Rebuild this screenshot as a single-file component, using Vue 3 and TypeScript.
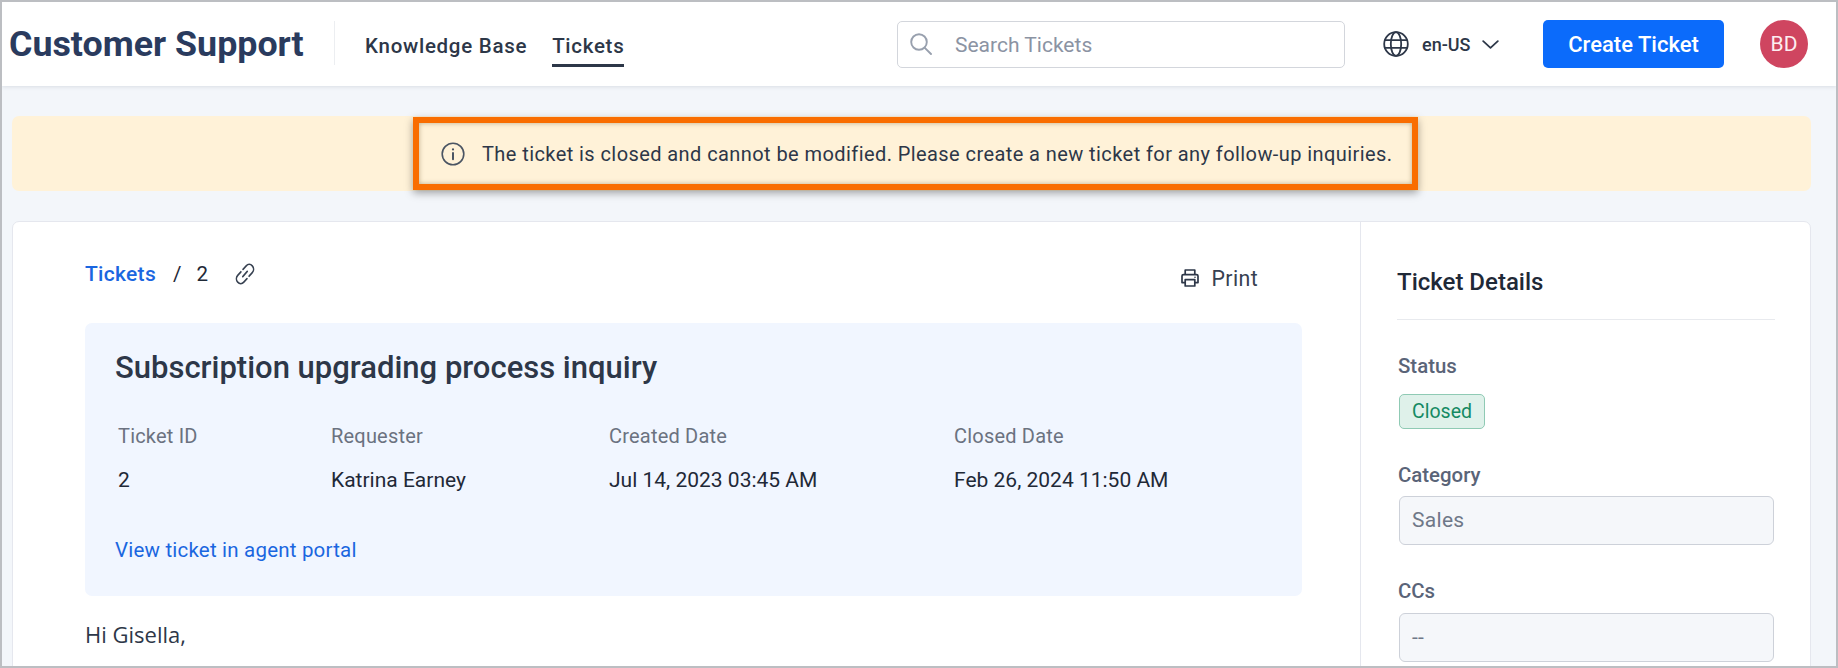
<script setup lang="ts">
const meta = [
  { label: 'Ticket ID', value: '2', w: 213 },
  { label: 'Requester', value: 'Katrina Earney', w: 278 },
  { label: 'Created Date', value: 'Jul 14, 2023 03:45 AM', w: 345 },
  { label: 'Closed Date', value: 'Feb 26, 2024 11:50 AM', w: 300 },
]
</script>

<template>
  <div class="frame">
    <header class="top">
      <div class="brand">Customer Support</div>
      <nav class="nav">
        <a class="nav-link">Knowledge Base</a>
        <a class="nav-link active">Tickets</a>
      </nav>
      <div class="search">
        <svg class="search-icon" viewBox="0 0 22 22" width="22" height="22" fill="none" stroke="#98a0ae" stroke-width="1.9" stroke-linecap="round">
          <circle cx="9" cy="9" r="7.8" />
          <path d="M14.8 14.8 21 21" />
        </svg>
        <span class="search-text">Search Tickets</span>
      </div>
      <div class="lang">
        <svg viewBox="0 0 26 26" width="26" height="26" fill="none" stroke="#2d3748" stroke-width="1.8">
          <circle cx="13" cy="13" r="11.8" />
          <ellipse cx="13" cy="13" rx="5.2" ry="11.8" />
          <path d="M1.6 9.2h22.8M1.6 16.8h22.8" />
        </svg>
        <span class="lang-text">en-US</span>
        <svg viewBox="0 0 17 9" width="17" height="9" fill="none" stroke="#2d3748" stroke-width="1.8" stroke-linecap="round" stroke-linejoin="round">
          <path d="M1.2 1.2 8.5 7.8l7.3-6.6" />
        </svg>
      </div>
      <button class="create">Create Ticket</button>
      <div class="avatar">BD</div>
    </header>

    <main class="page">
      <div class="banner">
        <div class="notice">
          <svg viewBox="0 0 24 24" width="24" height="24" fill="none" stroke="#4b5563" stroke-width="1.6" stroke-linecap="round">
            <circle cx="12" cy="12" r="10.8" />
            <path d="M12 11v6.2" stroke-width="2" />
            <circle cx="12" cy="7.4" r="1.1" fill="#4b5563" stroke="none" />
          </svg>
          <span class="notice-text">The ticket is closed and cannot be modified. Please create a new ticket for any follow-up inquiries.</span>
        </div>
      </div>

      <section class="card">
        <div class="main-col">
          <div class="crumbs">
            <div class="crumb-left">
              <a class="link">Tickets</a>
              <span class="slash">/</span>
              <span class="crumb-id">2</span>
              <svg class="link-icon" viewBox="0 0 20 22" width="20" height="22" fill="none" stroke="#374151" stroke-width="1.6" stroke-linecap="round" stroke-linejoin="round">
                <g transform="translate(10 11) scale(1 1.12) rotate(-45)">
                  <path d="M-1.5-4.3H-6a4.3 4.3 0 0 0 0 8.6h4.5" />
                  <path d="M1.5-4.3H6a4.3 4.3 0 0 1 0 8.6H1.5" />
                  <path d="M-3.2 0H3.2" />
                </g>
              </svg>
            </div>
            <div class="print">
              <svg viewBox="0 0 18 18" width="18" height="18" fill="none" stroke="#2d3748" stroke-width="1.7" stroke-linejoin="round">
                <path d="M4.2 5.6V1h9.6v4.6" />
                <path d="M4.2 13.6H1V7.1a1.5 1.5 0 0 1 1.5-1.5h13a1.5 1.5 0 0 1 1.5 1.5v6.5h-3.2" />
                <path d="M4.2 10.6h9.6V17H4.2z" />
                <circle cx="14" cy="8.2" r="0.8" fill="#2d3748" stroke="none" />
              </svg>
              <span>Print</span>
            </div>
          </div>

          <div class="info">
            <h1 class="title">Subscription upgrading process inquiry</h1>
            <div class="meta">
              <div v-for="m in meta" :key="m.label" class="meta-col" :style="{ width: m.w + 'px' }">
                <div class="meta-label">{{ m.label }}</div>
                <div class="meta-value">{{ m.value }}</div>
              </div>
            </div>
            <a class="link portal">View ticket in agent portal</a>
          </div>

          <p class="greeting">Hi Gisella,</p>
        </div>

        <aside class="side">
          <h2 class="side-title">Ticket Details</h2>
          <div class="side-label status-label">Status</div>
          <span class="badge">Closed</span>
          <div class="side-label cat-label">Category</div>
          <div class="field">Sales</div>
          <div class="side-label cc-label">CCs</div>
          <div class="field">--</div>
        </aside>
      </section>
    </main>
  </div>
</template>

<style>
html, body { margin: 0; padding: 0; }
</style>

<style scoped>
.frame {
  box-sizing: border-box;
  width: 1838px;
  height: 668px;
  border: 2px solid #bcbec2;
  overflow: hidden;
  background: #f3f6fa;
  font-family: Roboto, "Liberation Sans", sans-serif;
  color: #1f2937;
  display: flex;
  flex-direction: column;
}
.top {
  height: 84px;
  flex: none;
  background: #fff;
  display: flex;
  align-items: center;
  box-shadow: 0 1px 4px rgba(40, 50, 70, 0.12);
  position: relative;
  z-index: 1;
}
.brand {
  margin-left: 7px;
  width: 326px;
  height: 44px;
  line-height: 46px;
  margin-top: -2px;
  font-size: 35.8px;
  font-weight: 700;
  color: #2a3b5e;
  border-right: 1px solid #eceef1;
  box-sizing: border-box;
  white-space: nowrap;
}
.nav {
  display: flex;
  gap: 25px;
  margin-left: 30px;
  height: 84px;
  width: 532px;
}
.nav-link {
  font-size: 20.5px;
  font-weight: 500;
  letter-spacing: 0.72px;
  color: #2d3748;
  height: 41px;
  margin-top: 21px;
  line-height: 46px;
  white-space: nowrap;
}
.nav-link.active {
  border-bottom: 3px solid #2d3748;
}
.search {
  box-sizing: border-box;
  width: 448px;
  height: 47px;
  border: 1px solid #d3d6dc;
  border-radius: 5px;
  display: flex;
  align-items: center;
  padding-left: 12px;
}
.search-text {
  margin-left: 23px;
  margin-top: 2px;
  font-size: 21px;
  color: #8b93a3;
}
.lang {
  display: flex;
  align-items: center;
  margin-left: 38px;
  width: 160px;
}
.lang-text {
  margin-left: 13px;
  margin-right: 12px;
  font-size: 18px;
  font-weight: 500;
  color: #2d3748;
}
.create {
  width: 181px;
  height: 48px;
  border: 0;
  border-radius: 5px;
  background: #0b6bfb;
  color: #fff;
  font-family: inherit;
  font-size: 22px;
  font-weight: 500;
}
.avatar {
  width: 48px;
  height: 48px;
  margin-left: 36px;
  border-radius: 50%;
  background: #cf4560;
  color: #fdeef0;
  font-size: 21px;
  line-height: 48px;
  text-align: center;
}
.page {
  flex: 1;
  min-height: 0;
  padding: 30px 25px 0 10px;
}
.banner {
  height: 75px;
  background: #fff2d8;
  border-radius: 7px;
  padding-top: 1px;
  box-sizing: border-box;
}
.notice {
  box-sizing: border-box;
  margin-left: 401px;
  width: 1005px;
  height: 73px;
  border: 6px solid #f96d00;
  box-shadow: 0 3px 8px rgba(0, 0, 0, 0.35), inset 0 0 5px rgba(90, 70, 20, 0.4);
  display: flex;
  align-items: center;
  padding-left: 22px;
  gap: 17px;
}
.notice-text {
  font-size: 20px;
  letter-spacing: 0.42px;
  color: #2d3748;
  white-space: nowrap;
}
.card {
  margin-top: 30px;
  height: 480px;
  background: #fff;
  border: 1px solid #e5e7ee;
  border-radius: 7px;
  display: flex;
  box-sizing: border-box;
}
.main-col {
  width: 1348px;
  box-sizing: border-box;
  padding: 0 58px 0 72px;
  border-right: 1px solid #e5e7ee;
  flex: none;
}
.crumbs {
  height: 101px;
  display: flex;
  justify-content: space-between;
}
.crumb-left {
  display: flex;
  align-items: center;
  height: 104px;
  font-size: 20.5px;
}
.link {
  color: #1a66e0;
  font-size: 20.5px;
  letter-spacing: 0.2px;
}
.crumbs .link { font-size: 21px; font-weight: 500; letter-spacing: 0.3px; }
.slash { margin-left: 17px; }
.crumb-id { margin-left: 15px; }
.link-icon { margin-left: 27px; }
.print {
  display: flex;
  align-items: center;
  gap: 12px;
  height: 112px;
  padding-right: 44px;
  font-size: 21.3px;
  letter-spacing: 0.4px;
  color: #374151;
}
.info {
  height: 273px;
  background: #f1f6ff;
  border-radius: 7px;
  padding: 0 30px;
  box-sizing: border-box;
}
.title {
  margin: 0;
  padding-top: 27px;
  font-size: 31px;
  line-height: 36px;
  font-weight: 500;
  color: #2d3748;
  white-space: nowrap;
}
.meta {
  display: flex;
  margin: 38px 0 0 3px;
}
.meta-col { flex: none; }
.meta-label {
  font-size: 20px;
  line-height: 24px;
  color: #6b7280;
  letter-spacing: 0.2px;
}
.meta-value {
  margin-top: 20px;
  font-size: 21px;
  line-height: 24px;
  color: #1f2937;
  white-space: nowrap;
}
.portal {
  display: block;
  margin-top: 46px;
  line-height: 24px;
}
.greeting {
  margin: 24px 0 0;
  font-family: "Open Sans", sans-serif;
  font-size: 22px;
  line-height: 28px;
  color: #2d3748;
}
.side {
  flex: 1;
  padding: 46px 35px 0 36px;
  min-width: 0;
  box-sizing: border-box;
}
.side-title {
  margin: 0;
  padding-bottom: 23px;
  border-bottom: 1px solid #e8eaee;
  font-size: 24px;
  line-height: 28px;
  font-weight: 500;
  color: #1f2937;
}
.side-label {
  font-size: 20.4px;
  line-height: 24px;
  font-weight: 500;
  color: #5a6478;
  margin-left: 1px;
}
.status-label { margin-top: 34px; }
.badge {
  display: inline-block;
  box-sizing: border-box;
  margin: 16px 0 0 2px;
  width: 86px;
  height: 35px;
  line-height: 33px;
  text-align: center;
  background: #dff1ea;
  border: 1px solid #8fcab4;
  border-radius: 5px;
  color: #148a63;
  font-size: 19.5px;
}
.cat-label { margin-top: 34px; }
.cc-label { margin-top: 34px; }
.field {
  box-sizing: border-box;
  margin: 9px 0 0 2px;
  height: 49px;
  width: 375px;
  background: #f5f7fa;
  border: 1px solid #cdd1d9;
  border-radius: 6px;
  padding-left: 12px;
  line-height: 47px;
  font-size: 21px;
  letter-spacing: 0.3px;
  color: #6f7888;
}
.cc-label + .field { margin-top: 10px; }
</style>
